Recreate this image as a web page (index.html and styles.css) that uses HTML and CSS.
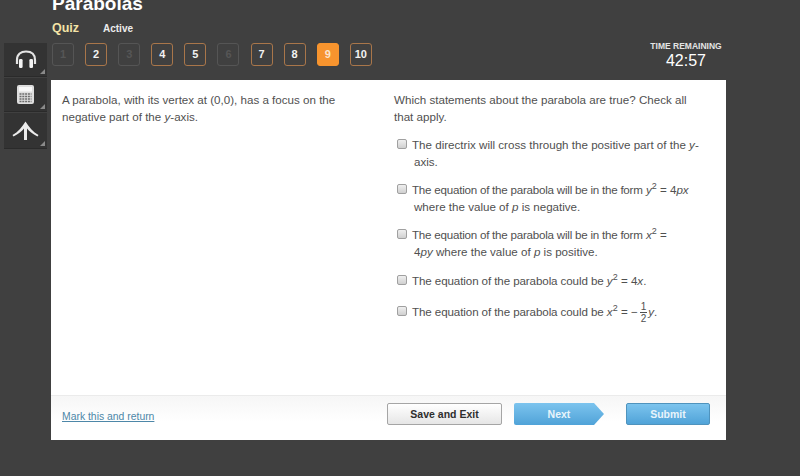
FILE: index.html
```html
<!DOCTYPE html>
<html lang="en">
<head>
    <meta charset="UTF-8">
    <title>Parabolas Quiz</title>
    <link rel="stylesheet" href="styles.css">
</head>
<body>

    <div class="header">
        <h1 class="title">Parabolas</h1>
        <div class="subtitle">
            <span class="quiz">Quiz</span>
            <span class="status">Active</span>
        </div>
    </div>

    <div class="layout">

        <div class="tools">
            <div class="tool">
                <svg width="22" height="19" viewBox="0 0 22 19">
                    <path d="M2 14 V10 C2 4 6 1.5 11 1.5 C16 1.5 20 4 20 10 V14" fill="none" stroke="#e4e4e4" stroke-width="2.2"/>
                    <rect x="4" y="9" width="3.6" height="9" rx="1.3" fill="#f4f4f4"/>
                    <rect x="14.4" y="9" width="3.6" height="9" rx="1.3" fill="#f4f4f4"/>
                </svg>
            </div>
            <div class="tool">
                <svg width="17" height="19" viewBox="0 0 17 19">
                    <rect x="0" y="0" width="17" height="19" rx="2" fill="#dedede"/>
                    <rect x="2" y="2" width="13" height="4.5" fill="#f8f8f8"/>
                    <path d="M2.5 9 H14.5 M2.5 11.5 H14.5 M2.5 14 H14.5 M2.5 16.5 H14.5" stroke="#6c6c6c" stroke-width="1.4" stroke-dasharray="2 .8"/>
                </svg>
            </div>
            <div class="tool tall">
                <svg width="27" height="19" viewBox="0 0 27 19">
                    <path d="M0.5 14 C6 11 10 6 13.5 0.5 C17 6 21 11 26.5 14 L25.5 15.5 C20.5 13 17 10 15 7.5 V19 H12 V7.5 C10 10 6.5 13 1.5 15.5 Z" fill="#ececec"/>
                </svg>
            </div>
        </div>

        <div class="main">

            <div class="nav">
                <div class="pages">
                    <span class="page off">1</span>
                    <span class="page">2</span>
                    <span class="page off">3</span>
                    <span class="page">4</span>
                    <span class="page">5</span>
                    <span class="page off">6</span>
                    <span class="page">7</span>
                    <span class="page">8</span>
                    <span class="page current">9</span>
                    <span class="page">10</span>
                </div>
                <div class="timer">
                    <div class="timer-label">TIME REMAINING</div>
                    <div class="timer-value">42:57</div>
                </div>
            </div>

            <div class="panel">
                <div class="content">
                    <div class="col-left">
                        <p>A parabola, with its vertex at (0,0), has a focus on the negative part of the <i>y</i>-axis.</p>
                    </div>
                    <div class="col-right">
                        <p>Which statements about the parabola are true? Check all that apply.</p>
                        <ul class="options">
                            <li class="option">
                                <span class="box"></span>The directrix will cross through the positive part of the <i>y</i>-<br><span class="cont">axis.</span>
                            </li>
                            <li class="option">
                                <span class="box"></span><span class="tight">The equation of the parabola will be in the form</span> <i>y</i><sup>2</sup> = 4<i>px</i><br><span class="cont">where the value of <i>p</i> is negative.</span>
                            </li>
                            <li class="option">
                                <span class="box"></span><span class="tight">The equation of the parabola will be in the form</span> <i>x</i><sup>2</sup> =<br><span class="cont">4<i>py</i> where the value of <i>p</i> is positive.</span>
                            </li>
                            <li class="option single">
                                <span class="box"></span><span class="tight2">The equation of the parabola could be</span> <i>y</i><sup>2</sup> = 4<i>x</i>.
                            </li>
                            <li class="option single">
                                <span class="box"></span><span class="tight2">The equation of the parabola could be</span> <i>x</i><sup>2</sup> = &minus;<span class="frac"><span class="num">1</span><span>2</span></span><i>y</i>.
                            </li>
                        </ul>
                    </div>
                </div>

                <div class="footer">
                    <a class="mark" href="#">Mark this and return</a>
                    <div class="actions">
                        <button class="btn save">Save and Exit</button>
                        <button class="btn next">Next</button>
                        <button class="btn submit">Submit</button>
                    </div>
                </div>
            </div>

        </div>
    </div>

</body>
</html>
```

FILE: styles.css
```css
html, body{
    margin: 0px;
    height: 476px;
    overflow: hidden;
}

body{
    background: #404040;
    font-family: 'Liberation Sans', Arial, sans-serif;
    font-size: 11.6px;
    color: #505050;
}

.header{
    display: flow-root;
    height: 43px;
    padding-left: 52px;
}

.title{
    margin: -6px 0px 0px 0px;
    font-size: 19px;
    line-height: 20px;
    color: white;
}

.subtitle{
    display: flex;
    align-items: baseline;
    margin-top: 7px;
}

.quiz{
    width: 51px;
    font-size: 12.5px;
    font-weight: bold;
    color: #f3e3a6;
}

.status{
    font-size: 10px;
    font-weight: bold;
    color: #ececec;
}

.layout{
    display: flex;
}

.tools{
    width: 43px;
    margin: 0px 4px;
}

.tool{
    display: flex;
    align-items: center;
    justify-content: center;
    height: 33px;
    margin-bottom: 1px;
    background: #333333;
    border-bottom: 1px solid #2a2a2a;
    position: relative;
}

.tool.tall{
    height: 35px;
}

.tool::after{
    content: "";
    position: absolute;
    right: 2px;
    bottom: 2px;
    border-style: solid;
    border-width: 0px 0px 5px 5px;
    border-color: transparent transparent #8a8a8a transparent;
}

.main{
    width: 675px;
}

.nav{
    display: flex;
    justify-content: space-between;
    height: 37px;
}

.pages{
    display: flex;
    gap: 11.1px;
    padding-left: 1px;
    align-items: flex-start;
}

.page{
    box-sizing: border-box;
    width: 22px;
    height: 23px;
    border: 1px solid #a9764a;
    border-radius: 3px;
    text-align: center;
    font-size: 11px;
    font-weight: bold;
    line-height: 21px;
    color: #f2f2f2;
}

.page.off{
    border-color: #555555;
    color: #565656;
}

.page.current{
    background: #f7942e;
    border-color: #f7942e;
    color: #fbe6cf;
}

.timer{
    width: 80px;
    text-align: center;
    color: white;
}

.timer-label{
    margin-top: -3px;
    font-size: 8.5px;
    font-weight: bold;
    line-height: 12px;
    color: #e4e4e4;
    white-space: nowrap;
}

.timer-value{
    font-size: 16px;
    line-height: 17px;
}

.panel{
    background: white;
    height: 360px;
    display: flex;
    flex-direction: column;
}

.content{
    flex: 1;
    display: flex;
    padding: 12px 10px 0px 11px;
}

p{
    margin: 0px;
    line-height: 16.5px;
}

.col-left{
    width: 280px;
    margin-right: 52px;
}

.col-right{
    width: 312px;
}

.options{
    list-style: none;
    margin: 11px 0px 0px 3px;
    padding: 0px;
}

.option{
    line-height: 17px;
    margin-bottom: 11px;
    white-space: nowrap;
}

.option.single{
    margin-top: 12px;
    margin-bottom: 0px;
}

.tight{
    letter-spacing: -0.23px;
}

.tight2{
    letter-spacing: -0.1px;
}

.box{
    display: inline-block;
    box-sizing: border-box;
    width: 10px;
    height: 10px;
    margin-right: 5px;
    border: 1px solid #a0a0a0;
    border-radius: 2px;
    background: linear-gradient(#efefef, #d0d0d0);
    vertical-align: 0px;
}

.cont{
    padding-left: 17px;
}

sup{
    font-size: 9px;
    line-height: 0;
}

.frac{
    display: inline-flex;
    flex-direction: column;
    align-items: center;
    vertical-align: middle;
    margin: 0px 1px 0px 2px;
    font-size: 10px;
    line-height: 11px;
}

.num{
    border-bottom: 1px solid #505050;
    padding: 0px 1px;
}

.footer{
    display: flex;
    justify-content: space-between;
    align-items: center;
    height: 44px;
    padding: 0px 16px 0px 11px;
    border-top: 1px solid #ebebeb;
    background: linear-gradient(#f6f6f6, white 60%);
}

.mark{
    margin-bottom: 3px;
    font-size: 10.4px;
    color: #4d87a8;
}

.actions{
    display: flex;
    gap: 12px;
    margin-bottom: 8px;
}

.btn{
    box-sizing: border-box;
    height: 22px;
    padding: 0px;
    border-radius: 2px;
    font-family: inherit;
    font-size: 10.5px;
    font-weight: bold;
}

.save{
    width: 115px;
    border: 1px solid #a5a5a5;
    background: linear-gradient(white, #e6e6e6);
    color: #2e2e2e;
}

.next{
    width: 90px;
    border: none;
    background: linear-gradient(#7cc4ee, #50a3d8);
    color: #e8f4fb;
    clip-path: polygon(0 0, 80px 0, 100% 50%, 80px 100%, 0 100%);
}

.submit{
    width: 84px;
    margin-left: 10px;
    border: 1px solid #4f93bd;
    background: linear-gradient(#7cc4ee, #50a3d8);
    color: #e8f4fb;
}
```
